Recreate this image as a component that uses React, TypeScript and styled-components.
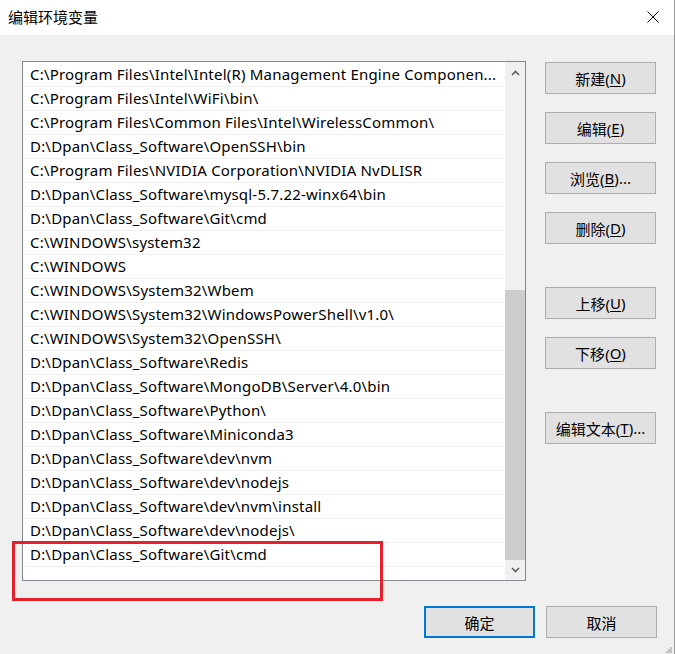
import styled, { createGlobalStyle } from "styled-components";

const GlobalStyle = createGlobalStyle`
  html, body {
    margin: 0;
    padding: 0;
    background: #f0f0f0;
  }
  * {
    box-sizing: border-box;
  }
`;

const FONT = `"Segoe UI", "Noto Sans", "Noto Sans CJK SC", sans-serif`;

const Window = styled.div`
  position: relative;
  width: 675px;
  height: 654px;
  background: #f0f0f0;
  border-right: 1px solid #9a9a9a;
  font-family: ${FONT};
  font-size: 15px;
  color: #000;
  overflow: hidden;
`;

const TitleBar = styled.div`
  height: 35px;
  background: #fff;
  display: flex;
  align-items: center;
  justify-content: space-between;
  padding: 0 15px 1px 8px;
`;

const Title = styled.span`
  font-size: 15px;
  line-height: 20px;
`;

const Body = styled.div`
  display: flex;
  gap: 19px;
  padding: 26px 0 0 22px;
`;

const ListBox = styled.div`
  width: 504px;
  height: 520px;
  border: 1px solid #828790;
  background: #fff;
  display: flex;
`;

const Rows = styled.div`
  flex: 1;
  padding-top: 1px;
  overflow: hidden;
`;

const Row = styled.div`
  height: 24px;
  line-height: 23px;
  padding-left: 7px;
  border-bottom: 1px solid #f0f0f0;
  margin-right: 1px;
  white-space: nowrap;
  letter-spacing: 0.2px;
`;

const ScrollBar = styled.div`
  width: 20px;
  background: #f0f0f0;
  display: flex;
  flex-direction: column;
`;

const Arrow = styled.div<{ $h: number }>`
  height: ${(p) => p.$h}px;
  display: flex;
  align-items: center;
  justify-content: center;
`;

const Track = styled.div`
  flex: 1;
  display: flex;
  flex-direction: column;
  justify-content: flex-end;
`;

const Thumb = styled.div`
  height: 270px;
  background: #cdcdcd;
`;

const ButtonColumn = styled.div`
  display: flex;
  flex-direction: column;
  gap: 43px;
  padding-top: 1px;
`;

const ButtonGroup = styled.div`
  display: flex;
  flex-direction: column;
  gap: 18px;
`;

const Button = styled.button<{ $primary?: boolean }>`
  width: 111px;
  height: 32px;
  padding: 0;
  background: #e1e1e1;
  border: ${(p) => (p.$primary ? "2px solid #0078d7" : "1px solid #adadad")};
  font-family: ${FONT};
  font-size: 15px;
  color: #000;
  display: flex;
  align-items: center;
  justify-content: center;
  cursor: default;

  u {
    text-decoration: underline;
    text-underline-offset: 2px;
  }
`;

const Footer = styled.div`
  display: flex;
  justify-content: flex-end;
  gap: 11px;
  padding: 25px 17px 0 0;
`;

const Highlight = styled.div`
  position: absolute;
  left: 12px;
  top: 541px;
  width: 371px;
  height: 60px;
  border: 3px solid #e8202a;
  pointer-events: none;
`;

const Grip = styled.svg`
  position: absolute;
  right: 2px;
  bottom: 1px;
`;

const paths = [
  "C:\\Program Files\\Intel\\Intel(R) Management Engine Componen...",
  "C:\\Program Files\\Intel\\WiFi\\bin\\",
  "C:\\Program Files\\Common Files\\Intel\\WirelessCommon\\",
  "D:\\Dpan\\Class_Software\\OpenSSH\\bin",
  "C:\\Program Files\\NVIDIA Corporation\\NVIDIA NvDLISR",
  "D:\\Dpan\\Class_Software\\mysql-5.7.22-winx64\\bin",
  "D:\\Dpan\\Class_Software\\Git\\cmd",
  "C:\\WINDOWS\\system32",
  "C:\\WINDOWS",
  "C:\\WINDOWS\\System32\\Wbem",
  "C:\\WINDOWS\\System32\\WindowsPowerShell\\v1.0\\",
  "C:\\WINDOWS\\System32\\OpenSSH\\",
  "D:\\Dpan\\Class_Software\\Redis",
  "D:\\Dpan\\Class_Software\\MongoDB\\Server\\4.0\\bin",
  "D:\\Dpan\\Class_Software\\Python\\",
  "D:\\Dpan\\Class_Software\\Miniconda3",
  "D:\\Dpan\\Class_Software\\dev\\nvm",
  "D:\\Dpan\\Class_Software\\dev\\nodejs",
  "D:\\Dpan\\Class_Software\\dev\\nvm\\install",
  "D:\\Dpan\\Class_Software\\dev\\nodejs\\",
  "D:\\Dpan\\Class_Software\\Git\\cmd",
];

type Action = { label: string; key: string; tail?: string };

const groups: Action[][] = [
  [
    { label: "新建", key: "N" },
    { label: "编辑", key: "E" },
    { label: "浏览", key: "B", tail: "..." },
    { label: "删除", key: "D" },
  ],
  [
    { label: "上移", key: "U" },
    { label: "下移", key: "O" },
  ],
  [{ label: "编辑文本", key: "T", tail: "..." }],
];

const Chevron = ({ up }: { up?: boolean }) => (
  <svg width="9" height="6" viewBox="0 0 9 6">
    <polyline
      points={up ? "1,5 4.5,1.5 8,5" : "1,1 4.5,4.5 8,1"}
      fill="none"
      stroke="#606060"
      strokeWidth="1.6"
    />
  </svg>
);

export default function App() {
  return (
    <>
      <GlobalStyle />
      <Window>
        <TitleBar>
          <Title>编辑环境变量</Title>
          <svg width="12" height="12" viewBox="0 0 12 12">
            <path d="M0.5 0.5 L11.5 11.5 M11.5 0.5 L0.5 11.5" stroke="#000" strokeWidth="1" />
          </svg>
        </TitleBar>

        <Body>
          <ListBox>
            <Rows>
              {paths.map((p, i) => (
                <Row key={i}>{p}</Row>
              ))}
            </Rows>
            <ScrollBar>
              <Arrow $h={21}>
                <Chevron up />
              </Arrow>
              <Track>
                <Thumb />
              </Track>
              <Arrow $h={20}>
                <Chevron />
              </Arrow>
            </ScrollBar>
          </ListBox>

          <ButtonColumn>
            {groups.map((g, gi) => (
              <ButtonGroup key={gi}>
                {g.map((a) => (
                  <Button key={a.label}>
                    {a.label}(<u>{a.key}</u>){a.tail}
                  </Button>
                ))}
              </ButtonGroup>
            ))}
          </ButtonColumn>
        </Body>

        <Footer>
          <Button $primary>确定</Button>
          <Button>取消</Button>
        </Footer>

        <Highlight />
        <Grip width="6" height="6" viewBox="0 0 6 6">
          <rect x="4" y="0" width="2" height="2" fill="#c4c4c4" />
          <rect x="2" y="2" width="2" height="2" fill="#c4c4c4" />
          <rect x="4" y="2" width="2" height="2" fill="#c4c4c4" />
          <rect x="0" y="4" width="2" height="2" fill="#c4c4c4" />
          <rect x="2" y="4" width="2" height="2" fill="#c4c4c4" />
          <rect x="4" y="4" width="2" height="2" fill="#c4c4c4" />
        </Grip>
      </Window>
    </>
  );
}
